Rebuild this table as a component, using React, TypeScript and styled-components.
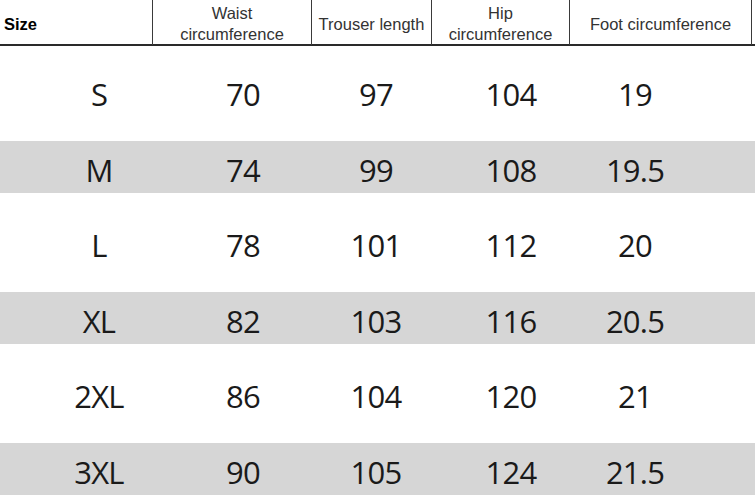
import React from "react";
import styled, { createGlobalStyle } from "styled-components";

const GlobalStyle = createGlobalStyle`
  html, body {
    margin: 0;
    padding: 0;
    background: #ffffff;
    width: 755px;
    height: 496px;
    overflow: hidden;
  }
  * { box-sizing: border-box; }
`;

const Page = styled.div`
  width: 755px;
  height: 496px;
  overflow: hidden;
  background: #ffffff;
  display: flex;
  flex-direction: column;
`;

const HeaderRow = styled.div`
  display: grid;
  grid-template-columns: 153px 159px 120px 138px 182px 1fr;
  height: 46px;
  border-bottom: 2px solid #2a2a2a;
  font-family: "Liberation Sans", Arial, sans-serif;
  font-size: 16.5px;
  line-height: 21px;
`;

const HeaderCell = styled.div<{ $left?: boolean; $bold?: boolean; $last?: boolean }>`
  display: flex;
  align-items: center;
  justify-content: ${(p) => (p.$left ? "flex-start" : "center")};
  text-align: ${(p) => (p.$left ? "left" : "center")};
  padding: 3px ${(p) => (p.$left ? "0 0 4px" : "0 0 0")};
  padding-left: ${(p) => (p.$left ? "4px" : "0")};
  border-right: ${(p) => (p.$last ? "none" : "1.5px solid #3a3a3a")};
  font-weight: ${(p) => (p.$bold ? 700 : 400)};
  color: ${(p) => (p.$bold ? "#000000" : "#333333")};
  white-space: nowrap;
`;

const Body = styled.div`
  display: flex;
  flex-direction: column;
  padding-top: 12px;
`;

const Row = styled.div`
  height: 75.5px;
  padding-top: 7px;
  flex-shrink: 0;
`;

const Band = styled.div<{ $shaded?: boolean }>`
  display: grid;
  grid-template-columns: 198px 90px 176px 94px 154px 1fr;
  align-items: center;
  height: 52px;
  padding-top: 7px;
  background: ${(p) => (p.$shaded ? "#d6d6d6" : "transparent")};
  font-family: "Open Sans", "Noto Sans", sans-serif;
  font-size: 31px;
  line-height: 1;
  letter-spacing: -0.8px;
  color: #1a1a1a;
`;

const Value = styled.div`
  text-align: center;
  white-space: nowrap;
`;

const rows: string[][] = [
  ["S", "70", "97", "104", "19"],
  ["M", "74", "99", "108", "19.5"],
  ["L", "78", "101", "112", "20"],
  ["XL", "82", "103", "116", "20.5"],
  ["2XL", "86", "104", "120", "21"],
  ["3XL", "90", "105", "124", "21.5"],
];

export default function App() {
  return (
    <Page>
      <GlobalStyle />
      <HeaderRow>
        <HeaderCell $left $bold>Size</HeaderCell>
        <HeaderCell>
          Waist
          <br />
          circumference
        </HeaderCell>
        <HeaderCell>Trouser length</HeaderCell>
        <HeaderCell>
          Hip
          <br />
          circumference
        </HeaderCell>
        <HeaderCell>Foot circumference</HeaderCell>
        <HeaderCell $last />
      </HeaderRow>
      <Body>
        {rows.map((r, i) => (
          <Row key={r[0]}>
            <Band $shaded={i % 2 === 1}>
              {r.map((v, j) => (
                <Value key={j}>{v}</Value>
              ))}
            </Band>
          </Row>
        ))}
      </Body>
    </Page>
  );
}
